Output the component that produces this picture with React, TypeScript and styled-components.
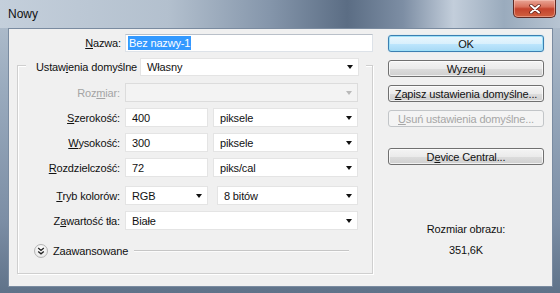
import styled, { createGlobalStyle } from "styled-components";

const GlobalStyle = createGlobalStyle`
  html, body { margin: 0; padding: 0; }
  body {
    background: #6d7f95;
    font-family: "Liberation Sans", Arial, sans-serif;
    font-size: 11px;
    color: #111;
  }
  * { box-sizing: border-box; }
`;

const Window = styled.div`
  width: 560px;
  height: 293px;
  display: flex;
  flex-direction: column;
  background: linear-gradient(180deg, #b4c1cf 0%, #9aabbe 30%, #7c8ea5 75%, #5f7289 100%);
  overflow: hidden;
`;

const TitleBar = styled.div`
  height: 28px;
  flex: none;
  display: flex;
  align-items: flex-start;
  justify-content: space-between;
  padding-left: 8px;
  background: linear-gradient(
    90deg,
    #c4cfdb 0%,
    #b3c0ce 30%,
    #8596ab 48%,
    #5b6d84 62%,
    #7d8ea4 72%,
    #c3cedb 81%,
    #9aabbd 90%,
    #b7c4d2 100%
  );
`;

const Title = styled.span`
  font-size: 12px;
  line-height: 12px;
  margin-top: 8px;
  color: #111;
`;

const CloseButton = styled.div`
  width: 43px;
  height: 18px;
  margin-right: 4px;
  border: 1px solid #5e2a24;
  border-top: none;
  border-radius: 0 0 5px 5px;
  background: linear-gradient(180deg, #e9a596 0%, #d9715c 40%, #c4432d 52%, #d0603f 100%);
  box-shadow: inset 0 0 0 1px rgba(255, 210, 200, 0.45);
  display: flex;
  align-items: center;
  justify-content: center;
`;

const Frame = styled.div`
  flex: 1;
  display: flex;
  padding: 0 8px 6px 8px;
`;

const Client = styled.div`
  flex: 1;
  display: flex;
  background: #f0f0f0;
  border: 1px solid #7a8ba0;
  padding: 5px 8px 0 0;
`;

const LeftPane = styled.div`
  width: 364px;
  display: flex;
  flex-direction: column;
`;

const RightPane = styled.div`
  width: 156px;
  margin-left: 15px;
  display: flex;
  flex-direction: column;
`;

const NameRow = styled.div`
  display: grid;
  grid-template-columns: 112px 248px;
  column-gap: 4px;
  align-items: center;
  height: 18px;
`;

const Label = styled.label<{ $disabled?: boolean }>`
  flex: none;
  text-align: right;
  white-space: nowrap;
  letter-spacing: -0.15px;
  color: ${(p) => (p.$disabled ? "#a4a4a4" : "#111")};
`;

const U = styled.span`
  text-decoration: underline;
  text-underline-offset: 1px;
`;

const TextBox = styled.div`
  height: 18px;
  background: #fff;
  border: 1px solid #dde2e8;
  border-top-color: #b9c0c9;
  display: flex;
  align-items: center;
  padding-left: 2px;
`;

const Selected = styled.span`
  background: #3399ff;
  color: #fff;
  padding: 1px 1px;
  letter-spacing: -0.15px;
`;

const GroupBox = styled.div`
  margin: 13px 0 0 8px;
  width: 356px;
  border: 1px solid #cfcfcf;
  box-shadow: inset 1px 1px 0 #fff, 1px 1px 0 #fff;
  padding-bottom: 15px;
  display: flex;
  flex-direction: column;
`;

const GroupHeader = styled.div`
  display: flex;
  align-items: center;
  gap: 3px;
  height: 18px;
  margin: -8px 6px 0 8px;
  padding: 0 7px 0 10px;
  background: #f0f0f0;
`;

const FieldRow = styled.div<{ $top?: number }>`
  display: grid;
  grid-template-columns: 102px 233px;
  column-gap: 5px;
  align-items: center;
  height: 19px;
  margin-top: ${(p) => p.$top ?? 6}px;
`;

const Pair = styled.div<{ $gap?: number; $first?: number }>`
  display: grid;
  grid-template-columns: ${(p) => p.$first ?? 83}px 1fr;
  column-gap: ${(p) => p.$gap ?? 5}px;
  height: 19px;
`;

const Field = styled.div<{ $disabled?: boolean }>`
  flex: 1;
  height: 100%;
  min-width: 0;
  display: flex;
  align-items: center;
  padding: 0 4px 0 6px;
  background: ${(p) => (p.$disabled ? "#f3f3f3" : "#fff")};
  border: 1px solid ${(p) => (p.$disabled ? "#dcdcdc" : "#e4e4e4")};
  color: #111;
  white-space: nowrap;
  letter-spacing: -0.15px;
`;

const FieldText = styled.span`
  flex: 1;
`;

const Arrow = styled.span<{ $disabled?: boolean }>`
  width: 0;
  height: 0;
  margin-right: 1px;
  border-left: 3.5px solid transparent;
  border-right: 3.5px solid transparent;
  border-top: 4px solid ${(p) => (p.$disabled ? "#b9b9b9" : "#111")};
`;

const AdvancedRow = styled.div`
  display: flex;
  align-items: center;
  height: 14px;
  margin: 14px 23px 0 16px;
`;

const RoundToggle = styled.span`
  width: 14px;
  height: 14px;
  border-radius: 50%;
  border: 1px solid #b4b4b4;
  background: radial-gradient(circle at 50% 35%, #ffffff 0%, #ececec 70%, #d6d6d6 100%);
  display: flex;
  align-items: center;
  justify-content: center;
`;

const AdvancedText = styled.span`
  margin-left: 5px;
  letter-spacing: -0.15px;
`;

const Rule = styled.span`
  flex: 1;
  margin-left: 6px;
  height: 2px;
  border-top: 1px solid #c6c6c6;
  border-bottom: 1px solid #fbfbfb;
`;

const Button = styled.div<{ $variant?: "default" | "disabled"; $top?: number }>`
  height: 17px;
  margin-top: ${(p) => p.$top ?? 8}px;
  border-radius: 3px;
  display: flex;
  align-items: center;
  justify-content: center;
  white-space: nowrap;
  letter-spacing: -0.15px;
  border: 1px solid
    ${(p) =>
      p.$variant === "default" ? "#3c7fb1" : p.$variant === "disabled" ? "#c2c5c8" : "#707070"};
  color: ${(p) => (p.$variant === "disabled" ? "#a6a6a6" : "#111")};
  background: ${(p) =>
    p.$variant === "default"
      ? "linear-gradient(180deg, #eaf6fd 0%, #d9f0fc 50%, #bee6fd 51%, #a7d9f5 100%)"
      : p.$variant === "disabled"
      ? "#f4f4f4"
      : "linear-gradient(180deg, #f4f4f4 0%, #ebebeb 50%, #dddddd 51%, #cfcfcf 100%)"};
  box-shadow: ${(p) =>
    p.$variant === "default"
      ? "inset 0 0 0 1px #9ee0f8, 0 0 1px #7fc8ec"
      : p.$variant === "disabled"
      ? "none"
      : "inset 0 0 0 1px rgba(255,255,255,0.7)"};
`;

const ImageInfo = styled.div`
  margin-top: 57px;
  text-align: center;
  line-height: 14px;
  letter-spacing: -0.15px;
`;

const InfoValue = styled.div`
  margin-top: 7px;
`;

function Select({ value, disabled }: { value?: string; disabled?: boolean }) {
  return (
    <Field $disabled={disabled}>
      <FieldText>{value}</FieldText>
      <Arrow $disabled={disabled} />
    </Field>
  );
}

function Input({ value }: { value: string }) {
  return (
    <Field>
      <FieldText>{value}</FieldText>
    </Field>
  );
}

export default function App() {
  return (
    <Window>
      <GlobalStyle />
      <TitleBar>
        <Title>Nowy</Title>
        <CloseButton>
          <svg width="12" height="10" viewBox="0 0 12 10">
            <path d="M2 1.5 L10 8.5 M10 1.5 L2 8.5" stroke="#5a1a12" strokeWidth="3.4" strokeLinecap="round" />
            <path d="M2 1.5 L10 8.5 M10 1.5 L2 8.5" stroke="#fff" strokeWidth="2" strokeLinecap="round" />
          </svg>
        </CloseButton>
      </TitleBar>
      <Frame>
        <Client>
          <LeftPane>
            <NameRow>
              <Label>
                <U>N</U>azwa:
              </Label>
              <TextBox>
                <Selected>Bez nazwy-1</Selected>
              </TextBox>
            </NameRow>

            <GroupBox>
              <GroupHeader>
                <Label>
                  Ustaw<U>i</U>enia domyślne
                </Label>
                <Select value="Własny" />
              </GroupHeader>

              <FieldRow $top={7}>
                <Label $disabled>
                  Roz<U>m</U>iar:
                </Label>
                <Select disabled />
              </FieldRow>

              <FieldRow>
                <Label>
                  <U>S</U>zerokość:
                </Label>
                <Pair>
                  <Input value="400" />
                  <Select value="piksele" />
                </Pair>
              </FieldRow>

              <FieldRow>
                <Label>
                  <U>W</U>ysokość:
                </Label>
                <Pair>
                  <Input value="300" />
                  <Select value="piksele" />
                </Pair>
              </FieldRow>

              <FieldRow>
                <Label>
                  <U>R</U>ozdzielczość:
                </Label>
                <Pair>
                  <Input value="72" />
                  <Select value="piks/cal" />
                </Pair>
              </FieldRow>

              <FieldRow $top={9}>
                <Label>
                  <U>T</U>ryb kolorów:
                </Label>
                <Pair $gap={9}>
                  <Select value="RGB" />
                  <Select value="8 bitów" />
                </Pair>
              </FieldRow>

              <FieldRow>
                <Label>
                  Z<U>a</U>wartość tła:
                </Label>
                <Select value="Białe" />
              </FieldRow>

              <AdvancedRow>
                <RoundToggle>
                  <svg width="8" height="8" viewBox="0 0 8 8">
                    <path d="M1.2 1 L4 3.4 L6.8 1 M1.2 4.4 L4 6.8 L6.8 4.4" fill="none" stroke="#222" strokeWidth="1.3" />
                  </svg>
                </RoundToggle>
                <AdvancedText>Zaawansowane</AdvancedText>
                <Rule />
              </AdvancedRow>
            </GroupBox>
          </LeftPane>

          <RightPane>
            <Button $variant="default" $top={1}>
              OK
            </Button>
            <Button>Wyzeruj</Button>
            <Button>
              <span>
                <U>Z</U>apisz ustawienia domyślne...
              </span>
            </Button>
            <Button $variant="disabled">
              <span>
                <U>U</U>suń ustawienia domyślne...
              </span>
            </Button>
            <Button $top={21}>
              <span>
                D<U>e</U>vice Central...
              </span>
            </Button>
            <ImageInfo>
              <div>Rozmiar obrazu:</div>
              <InfoValue>351,6K</InfoValue>
            </ImageInfo>
          </RightPane>
        </Client>
      </Frame>
    </Window>
  );
}
